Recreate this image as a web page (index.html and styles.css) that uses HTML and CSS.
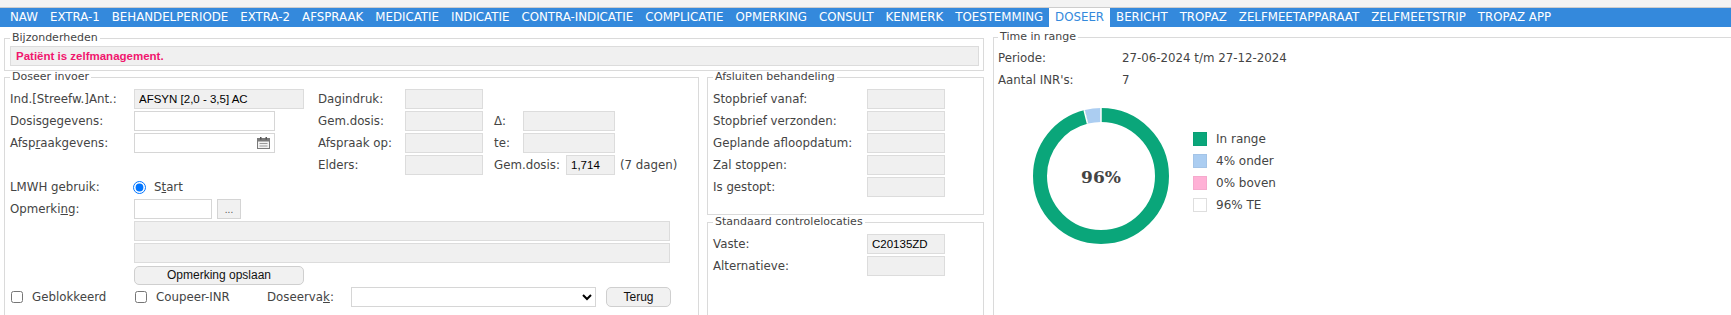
FILE: index.html
```html
<!DOCTYPE html>
<html lang="nl">
<head>
<meta charset="utf-8">
<title>Doseer</title>
<link rel="stylesheet" href="styles.css">
</head>
<body>
<div class="topstrip"></div>
<nav class="tabs">
  <span class="tab">NAW</span>
  <span class="tab">EXTRA-1</span>
  <span class="tab">BEHANDELPERIODE</span>
  <span class="tab">EXTRA-2</span>
  <span class="tab">AFSPRAAK</span>
  <span class="tab">MEDICATIE</span>
  <span class="tab">INDICATIE</span>
  <span class="tab">CONTRA-INDICATIE</span>
  <span class="tab">COMPLICATIE</span>
  <span class="tab">OPMERKING</span>
  <span class="tab">CONSULT</span>
  <span class="tab">KENMERK</span>
  <span class="tab">TOESTEMMING</span>
  <span class="tab active">DOSEER</span>
  <span class="tab">BERICHT</span>
  <span class="tab">TROPAZ</span>
  <span class="tab">ZELFMEETAPPARAAT</span>
  <span class="tab">ZELFMEETSTRIP</span>
  <span class="tab">TROPAZ APP</span>
</nav>

<main class="content">
  <div class="leftmain">
    <fieldset class="fs bijz">
      <legend>Bijzonderheden</legend>
      <div class="notice">Patiënt is zelfmanagement.</div>
    </fieldset>

    <div class="lower">
      <fieldset class="fs doseer">
        <legend>Doseer invoer</legend>
        <div class="row">
          <span class="l1">Ind.[Streefw.]Ant.:</span>
          <div class="c2"><input class="in ro w170" value="AFSYN [2,0 - 3,5] AC" readonly></div>
          <span class="l3">Dagindruk:</span>
          <div class="c4"><input class="in ro w78" readonly></div>
        </div>
        <div class="row">
          <span class="l1">Dosisgegevens:</span>
          <div class="c2"><input class="in w141"></div>
          <span class="l3">Gem.dosis:</span>
          <div class="c4"><input class="in ro w78" readonly></div>
          <span class="l5">Δ:</span>
          <input class="in ro w92" readonly>
        </div>
        <div class="row">
          <span class="l1">Afsp<u>r</u>aakgevens:</span>
          <div class="c2">
            <div class="in w141 datefield">
              <svg class="cal" width="13" height="12" viewBox="0 0 13 12" aria-hidden="true">
                <rect x="0.5" y="1.5" width="12" height="10" fill="#f2f2f2" stroke="#7a7a7a"/>
                <rect x="1" y="2" width="11" height="2.5" fill="#7a7a7a"/>
                <rect x="3" y="0" width="1.5" height="2.5" fill="#555"/>
                <rect x="8.5" y="0" width="1.5" height="2.5" fill="#555"/>
                <rect x="2.5" y="6" width="8" height="1" fill="#9a9a9a"/>
                <rect x="2.5" y="8.5" width="8" height="1" fill="#9a9a9a"/>
              </svg>
            </div>
          </div>
          <span class="l3">Afspraak op:</span>
          <div class="c4"><input class="in ro w78" readonly></div>
          <span class="l5">te:</span>
          <input class="in ro w92" readonly>
        </div>
        <div class="row">
          <span class="l1"></span>
          <div class="c2"></div>
          <span class="l3">Elders:</span>
          <div class="c4"><input class="in ro w78" readonly></div>
          <span class="l5 wide">Gem.dosis:</span>
          <input class="in ro w49" value="1,714" readonly>
          <span class="after">(7 dagen)</span>
        </div>
        <div class="row">
          <span class="l1">LMWH gebruik:</span>
          <label class="radio"><input type="radio" name="lmwh" checked><span>S<u>t</u>art</span></label>
        </div>
        <div class="row">
          <span class="l1">Opmerki<u>n</u>g:</span>
          <input class="in w78">
          <button class="btn dots" type="button">...</button>
        </div>
        <div class="row">
          <span class="l1"></span>
          <div class="in ro w536"></div>
        </div>
        <div class="row">
          <span class="l1"></span>
          <div class="in ro w536"></div>
        </div>
        <div class="row">
          <span class="l1"></span>
          <button class="btn w170" type="button">Opmerking opslaan</button>
        </div>
        <div class="row">
          <label class="check g1"><input type="checkbox"><span>Geblokkeerd</span></label>
          <label class="check g2"><input type="checkbox"><span>Coupeer-INR</span></label>
          <span class="l7">Doseerva<u>k</u>:</span>
          <select class="sel"><option></option></select>
          <button class="btn terug" type="button">Terug</button>
        </div>
      </fieldset>

      <div class="midcol">
        <fieldset class="fs afsl">
          <legend>Afsluiten behandeling</legend>
          <div class="row"><span class="lm">Stopbrief vanaf:</span><input class="in ro w78" readonly></div>
          <div class="row"><span class="lm">Stopbrief verzonden:</span><input class="in ro w78" readonly></div>
          <div class="row"><span class="lm">Geplande afloopdatum:</span><input class="in ro w78" readonly></div>
          <div class="row"><span class="lm">Zal stoppen:</span><input class="in ro w78" readonly></div>
          <div class="row"><span class="lm">Is gestopt:</span><input class="in ro w78" readonly></div>
        </fieldset>
        <fieldset class="fs std">
          <legend>Standaard controlelocaties</legend>
          <div class="row"><span class="lm">Vaste:</span><input class="in ro w78" value="C20135ZD" readonly></div>
          <div class="row"><span class="lm">Alternatieve:</span><input class="in ro w78" readonly></div>
        </fieldset>
      </div>
    </div>
  </div>

  <fieldset class="fs tir">
    <legend>Time in range</legend>
    <div class="row"><span class="l1">Periode:</span><span>27-06-2024 t/m 27-12-2024</span></div>
    <div class="row"><span class="l1">Aantal INR's:</span><span>7</span></div>
    <div class="chart">
      <svg class="donut" width="136" height="136" viewBox="0 0 136 136">
        <circle cx="68" cy="68" r="61" fill="none" stroke="#0aa67a" stroke-width="14"
                stroke-dasharray="367.94 400" transform="rotate(-90 68 68)"/>
        <circle cx="68" cy="68" r="61" fill="none" stroke="#abcdf1" stroke-width="14"
                stroke-dasharray="15.33 400" stroke-dashoffset="-367.94" transform="rotate(-90 68 68)"/>
        <line x1="68" y1="0" x2="68" y2="14.5" stroke="#fff" stroke-width="1.5"/>
        <line x1="51.09" y1="2.13" x2="54.57" y2="15.69" stroke="#fff" stroke-width="1.5"/>
        <text x="68" y="69" class="pct" text-anchor="middle" dominant-baseline="central">96%</text>
      </svg>
      <ul class="legendlist">
        <li><span class="sw green"></span>In range</li>
        <li><span class="sw blue"></span>4% onder</li>
        <li><span class="sw pink"></span>0% boven</li>
        <li><span class="sw white"></span>96% TE</li>
      </ul>
    </div>
  </fieldset>
</main>
</body>
</html>
```

FILE: styles.css
```css
* { box-sizing: border-box; }

html, body {
  margin: 0;
  padding: 0;
  background: #fff;
}

body {
  width: 1731px;
  height: 315px;
  overflow: hidden;
  font-family: "DejaVu Sans", Verdana, sans-serif;
  font-size: 11.8px;
  color: #444;
}

.topstrip {
  height: 8px;
  background: #f3f3f3;
  border-bottom: 1px solid #cdcdcd;
}

.tabs {
  display: flex;
  height: 19px;
  background: #3489dc;
  padding-left: 4px;
  white-space: nowrap;
}

.tab {
  padding: 0 6px;
  line-height: 19px;
  font-size: 11.8px;
  color: #fff;
}

.tab.active {
  background: #fff;
  color: #3489dc;
}

.content {
  display: grid;
  grid-template-columns: 980px 748px;
  column-gap: 9px;
  padding-left: 4px;
  margin-top: 5px;
}

.fs {
  margin: 0;
  border: 1px solid #dadada;
  padding: 2px 4px 4px 5px;
  min-width: 0;
}

.fs legend {
  padding: 0 2px;
  font-size: 11px;
  line-height: 12px;
  color: #444;
}

.notice {
  height: 20px;
  background: #f0f0f0;
  border: 1px solid #dcdcdc;
  padding-left: 5px;
  font-family: "Liberation Sans", Arial, sans-serif;
  font-weight: bold;
  font-size: 11.5px;
  line-height: 18px;
  color: #f0166e;
}

.lower {
  display: flex;
  gap: 8px;
  height: 260px;
}

.doseer {
  width: 695px;
  padding: 6px 4px 20px 5px;
}

.midcol {
  width: 277px;
  display: flex;
  flex-direction: column;
  gap: 1px;
}

.afsl {
  padding: 6px 4px 15px 5px;
}

.std {
  flex: 1;
  padding: 6px 4px 10px 5px;
}

.row {
  display: flex;
  align-items: center;
  height: 20px;
  margin-bottom: 2px;
  white-space: nowrap;
}

.l1 { width: 124px; flex: none; }
.c2 { width: 184px; flex: none; display: flex; }
.l3 { width: 87px; flex: none; }
.c4 { width: 89px; flex: none; display: flex; }
.l5 { width: 29px; flex: none; }
.l5.wide { width: 72px; }
.lm { width: 154px; flex: none; }
.after { margin-left: 5px; }

.in {
  height: 20px;
  border: 1px solid #d6d6d6;
  background: #fff;
  margin: 0;
  padding: 0 4px;
  font-family: "Liberation Sans", Arial, sans-serif;
  font-size: 11.5px;
  color: #000;
  outline: none;
  flex: none;
}

.in.ro {
  background: #f0f0f0;
  border-color: #dcdcdc;
}

.w170 { width: 170px; }
.w141 { width: 141px; }
.w78 { width: 78px; }
.w92 { width: 92px; }
.w49 { width: 49px; }
.w536 { width: 536px; }

.datefield {
  display: flex;
  align-items: center;
  justify-content: flex-end;
  padding-right: 4px;
}

.radio {
  display: flex;
  align-items: center;
}

.radio input {
  margin: 0 8px 0 -1px;
  width: 13px;
  height: 13px;
  accent-color: #0075ff;
}

.btn {
  height: 19px;
  margin: 0;
  padding: 0;
  border: 1px solid #cfcfcf;
  border-radius: 5px;
  background: #f1f1f1;
  font-family: "Liberation Sans", Arial, sans-serif;
  font-size: 12px;
  color: #111;
  flex: none;
}

.btn.dots {
  width: 24px;
  height: 20px;
  margin-left: 5px;
  border-radius: 0;
  border-color: #d4d4d4;
  font-size: 10px;
  color: #555;
}

.btn.terug {
  width: 65px;
  height: 20px;
  margin-left: 10px;
}

.check {
  display: flex;
  align-items: center;
  flex: none;
}

.check input {
  margin: 0 9px 0 1px;
  width: 12px;
  height: 12px;
}

.g1 { width: 124px; }
.g2 { width: 133px; }

.l7 { width: 84px; flex: none; }

.sel {
  width: 245px;
  height: 20px;
  margin: 0;
  border: 1px solid #d6d6d6;
  border-radius: 0;
  background: #fff;
  font-family: "Liberation Sans", Arial, sans-serif;
  font-size: 11.5px;
  flex: none;
}

.tir {
  margin-top: -1px;
  padding: 5px 4px 40px 4px;
}

.chart {
  display: flex;
  align-items: flex-start;
  margin: 18px 0 0 35px;
}

.donut { display: block; flex: none; }

.pct {
  font-family: "DejaVu Serif", Georgia, serif;
  font-weight: bold;
  font-size: 17px;
  fill: #444;
}

.legendlist {
  list-style: none;
  margin: 24px 0 0 24px;
  padding: 0;
}

.legendlist li {
  display: flex;
  align-items: center;
  height: 14px;
  margin-bottom: 8px;
  font-size: 12px;
  color: #444;
}

.sw {
  width: 14px;
  height: 14px;
  margin-right: 9px;
  border: 1px solid rgba(0, 0, 0, 0.04);
}

.sw.green { background: #0aa67a; }
.sw.blue { background: #abcdf1; }
.sw.pink { background: #ffb1d6; }
.sw.white { background: #fff; border-color: #dedede; }
```
